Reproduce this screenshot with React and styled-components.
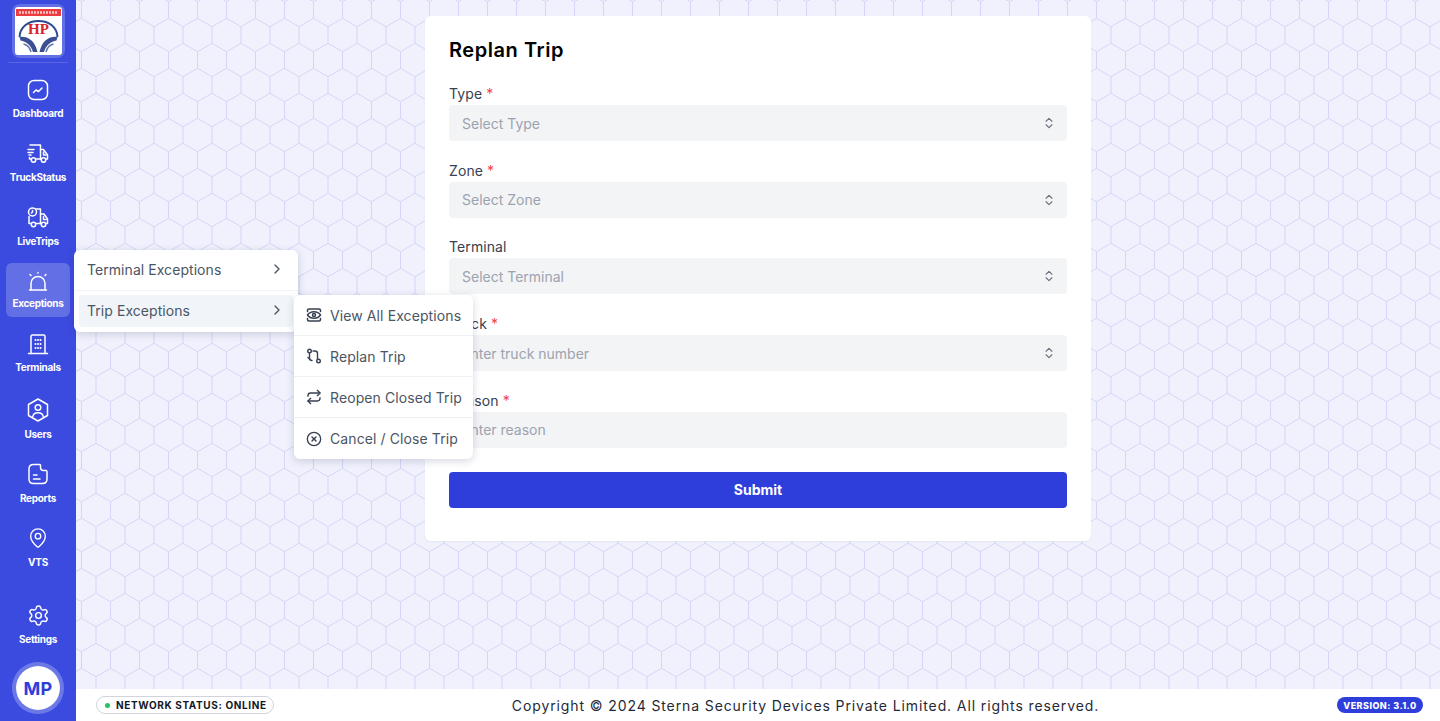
import styled, { createGlobalStyle } from "styled-components";
import { ChevronRight, ChevronsUpDown, CircleX, MapPin, Repeat, Settings } from "lucide-react";

const hexPath = [0, -29].flatMap((dx) =>
  [0, -50, 50].map(
    (dy) =>
      `M${5.5 + dx} ${1.7 + dy}V${18.3 + dy}L${20 + dx} ${26.7 + dy}V${43.3 + dy}L${5.5 + dx} ${51.7 + dy}M${34.5 + dx} ${1.7 + dy}V${18.3 + dy}L${20 + dx} ${26.7 + dy}M${20 + dx} ${43.3 + dy}L${34.5 + dx} ${51.7 + dy}`
  )
).join("");

const hexTile = `url("data:image/svg+xml,${encodeURIComponent(
  `<svg xmlns='http://www.w3.org/2000/svg' width='29' height='50'><path d='${hexPath}' fill='none' stroke='#d3d6f7' stroke-width='1'/></svg>`
)}")`;

const GlobalStyle = createGlobalStyle`
  html, body {
    margin: 0;
    padding: 0;
    height: 100%;
    overflow: hidden;
    font-family: "Inter", "Noto Sans", sans-serif;
  }
  * { box-sizing: border-box; }
`;

const Shell = styled.div`
  display: flex;
  width: 1440px;
  height: 721px;
`;

const Sidebar = styled.aside`
  width: 76px;
  flex-shrink: 0;
  display: flex;
  flex-direction: column;
  align-items: center;
  background: #3c4bdf;
  color: #fff;
`;

const LogoWrap = styled.div`
  width: 100%;
  height: 63px;
  padding-top: 4px;
  margin: 0 0 8px;
  display: flex;
  justify-content: center;
  position: relative;
  &::after {
    content: "";
    position: absolute;
    left: 8px;
    right: 8px;
    bottom: 0;
    height: 1px;
    background: rgba(255, 255, 255, 0.15);
  }
`;

const LogoRing = styled.div`
  width: 53px;
  height: 54px;
  padding: 3px;
  border-radius: 8px;
  background: rgba(255, 255, 255, 0.2);
`;

const LogoCard = styled.div`
  width: 100%;
  height: 100%;
  border-radius: 3px;
  background: #fff;
  overflow: hidden;
`;

const Nav = styled.nav`
  display: flex;
  flex-direction: column;
  align-items: center;
`;

const NavItem = styled.div`
  position: relative;
  width: 64px;
  height: 54px;
  margin-bottom: 10px;
  border-radius: 6px;
  display: flex;
  flex-direction: column;
  align-items: center;
  padding-top: ${(p) => p.$top ?? 7}px;
  background: ${(p) => (p.$active ? "rgba(255,255,255,0.2)" : "transparent")};
`;

const IconSlot = styled.div`
  height: 24px;
  display: flex;
  align-items: center;
  justify-content: center;
`;

const NavLabel = styled.span`
  margin-top: ${(p) => p.$gap ?? 5}px;
  font-size: 10px;
  line-height: 12px;
  font-weight: 700;
  white-space: nowrap;
  letter-spacing: -0.3px;
`;

const SidebarBottom = styled.div`
  margin-top: auto;
  display: flex;
  flex-direction: column;
  align-items: center;
`;

const SettingsItem = styled(NavItem)`
  margin-bottom: 12px;
`;

const Avatar = styled.div`
  width: 52px;
  height: 52px;
  margin-bottom: 7px;
  border-radius: 50%;
  border: 4px solid rgba(255, 255, 255, 0.25);
  background: #fff;
  background-clip: padding-box;
  display: flex;
  align-items: center;
  justify-content: center;
  color: #2d3edb;
  font-size: 18px;
  font-weight: 700;
  letter-spacing: 0.4px;
`;

const Flyout = styled.div`
  position: absolute;
  z-index: 10;
  left: 68px;
  top: -13px;
  width: 224px;
  height: 82px;
  padding: 4px 5px;
  border-radius: 6px;
  background: #fff;
  box-shadow: 0 2px 8px rgba(30, 41, 90, 0.18);
  color: #4b5563;
`;

const FlyoutRow = styled.div`
  height: 32px;
  padding: 0 8px 2px;
  margin-bottom: ${(p) => (p.$last ? 0 : 9)}px;
  border-radius: 4px;
  display: flex;
  align-items: center;
  justify-content: space-between;
  font-size: 14px;
  letter-spacing: 0.06px;
  background: ${(p) => (p.$active ? "#f1f5f9" : "transparent")};
  position: relative;
  ${(p) =>
    p.$last
      ? ""
      : `&::after {
    content: "";
    position: absolute;
    left: -5px;
    right: -5px;
    bottom: -5px;
    height: 1px;
    background: #f1f3f9;
  }`}
`;

const SubMenu = styled.div`
  position: absolute;
  left: 220px;
  top: 45px;
  width: 179px;
  border-radius: 6px;
  background: #fff;
  box-shadow: 0 2px 8px rgba(30, 41, 90, 0.18);
`;

const SubRow = styled.div`
  height: 41px;
  padding-left: 12px;
  display: flex;
  align-items: center;
  gap: 8px;
  font-size: 14px;
  letter-spacing: 0.1px;
  white-space: nowrap;
  color: #4b5563;
  border-bottom: 1px solid #f0f1f6;
  &:last-child { border-bottom: none; }
  svg { color: #374151; flex-shrink: 0; }
`;

const Main = styled.div`
  flex: 1;
  min-width: 0;
  display: flex;
  flex-direction: column;
`;

const Content = styled.main`
  flex: 1;
  padding-top: 16px;
  display: flex;
  justify-content: center;
  align-items: flex-start;
  background-color: #f0f1fc;
  background-image: ${hexTile};
  background-size: 29px 50px;
`;

const Card = styled.section`
  width: 666px;
  height: 525px;
  padding: 22px 24px;
  border-radius: 6px;
  background: #fff;
  box-shadow: 0 1px 2px rgba(30, 41, 90, 0.05);
`;

const Title = styled.h1`
  margin: 0 0 22px;
  height: 24px;
  font-size: 20px;
  line-height: 24px;
  font-weight: 600;
  letter-spacing: 0.55px;
  color: #000;
`;

const Field = styled.div`
  margin-bottom: 19.7px;
`;

const Label = styled.label`
  display: block;
  height: 21px;
  font-size: 14px;
  line-height: 20px;
  letter-spacing: 0.1px;
  color: #374151;
`;

const Req = styled.span`
  color: #ef4444;
`;

const SelectBox = styled.div`
  height: 36px;
  padding: 0 11px 0 13px;
  border-radius: 4px;
  background: #f3f4f6;
  display: flex;
  align-items: center;
  justify-content: space-between;
  font-size: 14px;
  color: #9ca3af;
  svg { color: #6b7280; }
`;

const SubmitButton = styled.button`
  display: block;
  width: 100%;
  height: 36px;
  margin-top: 24px;
  border: 0;
  border-radius: 4px;
  background: #2d3edb;
  color: #fff;
  font-family: inherit;
  font-size: 14px;
  font-weight: 700;
`;

const Footer = styled.footer`
  height: 32px;
  padding: 0 17px 0 20px;
  display: flex;
  align-items: center;
  justify-content: space-between;
  background: #fff;
`;

const NetworkPill = styled.div`
  width: 178px;
  height: 18px;
  padding-left: 8px;
  border: 1px solid #d1d5db;
  border-radius: 9px;
  display: flex;
  align-items: center;
  gap: 6px;
  font-size: 10px;
  font-weight: 700;
  letter-spacing: 0.62px;
  color: #111827;
  white-space: nowrap;
`;

const Dot = styled.span`
  width: 5px;
  height: 5px;
  border-radius: 50%;
  background: #22c55e;
`;

const Copyright = styled.p`
  margin: 0;
  font-size: 14px;
  letter-spacing: 0.89px;
  color: #1f2937;
  white-space: nowrap;
`;

const VersionPill = styled.div`
  width: 86px;
  height: 16px;
  border-radius: 8px;
  background: #2d3edb;
  color: #fff;
  font-size: 9px;
  font-weight: 800;
  letter-spacing: 0.45px;
  display: flex;
  align-items: center;
  justify-content: center;
  white-space: nowrap;
`;

const HpLogo = () => (
  <svg width="47" height="48" viewBox="0 0 47 48">
    <rect x="1" y="2" width="45" height="7" fill="#ee3b3f" />
    <path d="M4 5.500H43" stroke="#fff" strokeWidth="2.500" strokeDasharray="2 1" opacity="0.7" />
    <path d="M4.500 30C5 20 13 14 23.500 14S42 20 42.500 30" fill="none" stroke="#2f4a92" strokeWidth="2" />
    <text x="23.500" y="27" textAnchor="middle" fontFamily="Liberation Serif, serif" fontWeight="700" fontSize="15" fill="#d8242b">HP</text>
    <path d="M4.500 30C12 29 20 33 22.500 45H18C16 38 11 34.500 5.500 33.500Z" fill="#3c4f92" />
    <path d="M42.500 30C35 29 27 33 24.500 45H29C31 38 36 34.500 41.500 33.500Z" fill="#3c4f92" />
    <path d="M8.500 37C13 38 15 41 16 45M38.500 37C34 38 32 41 31 45" fill="none" stroke="#6677ad" strokeWidth="1.500" />
  </svg>
);

const DashboardIcon = () => (
  <svg width="24" height="24" viewBox="0 0 24 24" fill="none" stroke="currentColor" strokeWidth="1.500" strokeLinecap="round" strokeLinejoin="round">
    <rect x="2.500" y="2.500" width="19" height="19" rx="5.500" />
    <path d="M7.500 14.500L10 12L12.500 13.500L16 10" />
  </svg>
);

const TruckIcon = () => (
  <svg width="24" height="24" viewBox="0 0 24 24" fill="none" stroke="currentColor" strokeWidth="1.500" strokeLinecap="round" strokeLinejoin="round">
    <path d="M4 3H14.500V17H10.500M5 17H3.500V15.500" />
    <path d="M14.500 7.500H17.500L21.500 13V17H20M15 17H14.500" />
    <path d="M2 7.500H8M2 10.500H7M3 13H5" />
    <circle cx="7.500" cy="18" r="2.200" />
    <circle cx="17.500" cy="18" r="2.200" />
    <path d="M17.500 10V13H20" />
  </svg>
);

const LiveTripIcon = () => (
  <svg width="24" height="24" viewBox="0 0 24 24" fill="none" stroke="currentColor" strokeWidth="1.500" strokeLinecap="round" strokeLinejoin="round">
    <circle cx="6.500" cy="6" r="4" />
    <path d="M6.500 4.500V6L5.500 7" />
    <path d="M9.500 3H14.500V17.500H10.500M5 17.500H3V10.500" />
    <path d="M14.500 8H18L21.500 13V17.500H20M15.500 17.500H14.500" />
    <circle cx="7.500" cy="18.500" r="2.200" />
    <circle cx="17.500" cy="18.500" r="2.200" />
    <path d="M17.500 10.500V13.500H20" />
  </svg>
);

const SirenIcon = () => (
  <svg width="24" height="24" viewBox="0 0 24 24" fill="none" stroke="currentColor" strokeWidth="1.500" strokeLinecap="round" strokeLinejoin="round">
    <path d="M5 20V13.500C5 9.500 8 6.500 12 6.500S19 9.500 19 13.500V20" />
    <path d="M3.500 20H20.500" />
    <path d="M12 2.500V3M4 4.500L5 5.500M20 4.500L19 5.500" />
  </svg>
);

const BuildingIcon = () => (
  <svg width="24" height="24" viewBox="0 0 24 24" fill="none" stroke="currentColor" strokeWidth="1.500" strokeLinecap="round" strokeLinejoin="round">
    <path d="M2.500 21.500H21.500" />
    <path d="M5 21.500V4.500C5 3.500 5.500 3 6.500 3H17.500C18.500 3 19 3.500 19 4.500V21.500" />
    <path d="M9.500 8H9.510M12 8H12.010M14.500 8H14.510M9.500 12H9.510M12 12H12.010M14.500 12H14.510M9.500 16H9.510M12 16H12.010M14.500 16H14.510" strokeWidth="2" />
  </svg>
);

const UserHexIcon = () => (
  <svg width="24" height="24" viewBox="0 0 24 24" fill="none" stroke="currentColor" strokeWidth="1.500" strokeLinecap="round" strokeLinejoin="round">
    <path d="M12 1L21.500 6.500V17.500L12 23L2.500 17.500V6.500Z" />
    <circle cx="12" cy="9.500" r="2.800" />
    <path d="M6.800 18.500C7.200 16 9 14.800 12 14.800S16.800 16 17.200 18.500" />
  </svg>
);

const ReportIcon = () => (
  <svg width="24" height="24" viewBox="0 0 24 24" fill="none" stroke="currentColor" strokeWidth="1.500" strokeLinecap="round" strokeLinejoin="round">
    <path d="M14 2.500H7.500C4.500 2.500 3 4 3 7V17C3 20 4.500 21.500 7.500 21.500H16.500C19.500 21.500 21 20 21 17V9.500" />
    <path d="M14.500 3V5.500C14.500 7.500 15.500 8.500 17.500 8.500H20.500" />
    <path d="M7.500 13H11M7.500 17H14" />
  </svg>
);

const EyeFrameIcon = () => (
  <svg width="16" height="16" viewBox="0 0 16 16" fill="none" stroke="currentColor" strokeWidth="1.500" strokeLinecap="round" strokeLinejoin="round">
    <path d="M1.500 4.500V3.500C1.500 2.500 2 2 3 2H13C14 2 14.500 2.500 14.500 3.500V4.500" />
    <path d="M1.500 11.500V12.500C1.500 13.500 2 14 3 14H13C14 14 14.500 13.500 14.500 12.500V11.500" />
    <path d="M1.500 8C3 5.800 5.200 4.800 8 4.800S13 5.800 14.500 8C13 10.200 10.800 11.200 8 11.200S3 10.200 1.500 8Z" />
    <circle cx="8" cy="8" r="1.500" />
  </svg>
);

const ReplanIcon = () => (
  <svg width="16" height="16" viewBox="0 0 16 16" fill="none" stroke="currentColor" strokeWidth="1.400" strokeLinecap="round" strokeLinejoin="round">
    <circle cx="3.500" cy="3" r="1.800" />
    <circle cx="12.500" cy="13" r="1.800" />
    <path d="M3.500 5V10C3.500 11.500 4.500 12.500 6 12.500" />
    <path d="M2 9.500L3.500 11" />
    <path d="M7 3H9C10.500 3 11.500 4 11.500 5.500V11" />
  </svg>
);

const navTop = [
  { label: "Dashboard", icon: <DashboardIcon /> },
  { label: "TruckStatus", icon: <TruckIcon /> },
  { label: "LiveTrips", icon: <LiveTripIcon /> },
];

const navBottom = [
  { label: "Users", icon: <UserHexIcon />, gap: 6 },
  { label: "Reports", icon: <ReportIcon />, gap: 6 },
  { label: "VTS", icon: <MapPin size={22} strokeWidth={1.5} />, gap: 6 },
];

const fields = [
  { label: "Type", required: true, placeholder: "Select Type", select: true },
  { label: "Zone", required: true, placeholder: "Select Zone", select: true },
  { label: "Terminal", placeholder: "Select Terminal", select: true },
  { label: "Truck", required: true, placeholder: "Enter truck number", select: true },
  { label: "Reason", required: true, placeholder: "Enter reason" },
];

const App = () => {
  return (
    <>
      <GlobalStyle />
      <Shell>
        <Sidebar>
          <LogoWrap>
            <LogoRing>
              <LogoCard>
                <HpLogo />
              </LogoCard>
            </LogoRing>
          </LogoWrap>
          <Nav>
            {navTop.map((item) => (
              <NavItem key={item.label}>
                <IconSlot>{item.icon}</IconSlot>
                <NavLabel>{item.label}</NavLabel>
              </NavItem>
            ))}
            <NavItem $active>
              <IconSlot>
                <SirenIcon />
              </IconSlot>
              <NavLabel $gap={3}>Exceptions</NavLabel>
              <Flyout>
                <FlyoutRow>
                  Terminal Exceptions
                  <ChevronRight size={16} />
                </FlyoutRow>
                <FlyoutRow $active $last>
                  Trip Exceptions
                  <ChevronRight size={16} />
                </FlyoutRow>
                <SubMenu>
                  <SubRow>
                    <EyeFrameIcon />
                    View All Exceptions
                  </SubRow>
                  <SubRow>
                    <ReplanIcon />
                    Replan Trip
                  </SubRow>
                  <SubRow>
                    <Repeat size={16} />
                    Reopen Closed Trip
                  </SubRow>
                  <SubRow>
                    <CircleX size={16} />
                    Cancel / Close Trip
                  </SubRow>
                </SubMenu>
              </Flyout>
            </NavItem>
            <NavItem $top={5}>
              <IconSlot>
                <BuildingIcon />
              </IconSlot>
              <NavLabel $gap={5}>Terminals</NavLabel>
            </NavItem>
            {navBottom.map((item) => (
              <NavItem key={item.label}>
                <IconSlot>{item.icon}</IconSlot>
                <NavLabel $gap={item.gap}>{item.label}</NavLabel>
              </NavItem>
            ))}
          </Nav>
          <SidebarBottom>
            <SettingsItem>
              <IconSlot>
                <Settings size={23} strokeWidth={1.5} />
              </IconSlot>
              <NavLabel $gap={6}>Settings</NavLabel>
            </SettingsItem>
            <Avatar>MP</Avatar>
          </SidebarBottom>
        </Sidebar>
        <Main>
          <Content>
            <Card>
              <Title>Replan Trip</Title>
              {fields.map((field) => (
                <Field key={field.label}>
                  <Label>
                    {field.label}
                    {field.required && <Req> *</Req>}
                  </Label>
                  <SelectBox>
                    {field.placeholder}
                    {field.select && <ChevronsUpDown size={14} />}
                  </SelectBox>
                </Field>
              ))}
              <SubmitButton>Submit</SubmitButton>
            </Card>
          </Content>
          <Footer>
            <NetworkPill>
              <Dot />
              NETWORK STATUS: ONLINE
            </NetworkPill>
            <Copyright>Copyright © 2024 Sterna Security Devices Private Limited. All rights reserved.</Copyright>
            <VersionPill>VERSION: 3.1.0</VersionPill>
          </Footer>
        </Main>
      </Shell>
    </>
  );
};

export default App;
